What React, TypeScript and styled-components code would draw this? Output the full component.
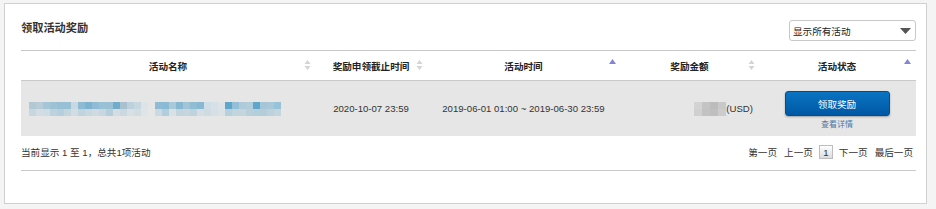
import { createGlobalStyle, styled } from "styled-components";

const GlobalStyle = createGlobalStyle`
  body {
    margin: 0;
    background: #f4f4f4;
    font-family: "Liberation Sans", Arial, "Noto Sans CJK SC", sans-serif;
    color: #333;
  }
`;

const COLUMNS = "294px 112px 193px 139px 156px";

const Page = styled.div`
  padding: 3px 0 0 4px;
`;

const Card = styled.div`
  width: 923px;
  height: 201px;
  box-sizing: border-box;
  border: 1px solid #d0d0d0;
  background: #fff;
  padding: 0 10px 0 16px;
`;

const TopBar = styled.div`
  display: flex;
  justify-content: space-between;
  align-items: flex-start;
  height: 46px;
`;

const Title = styled.h2`
  margin: 14px 0 0;
  font-size: 11.2px;
  line-height: 20px;
  font-weight: bold;
  color: #333;
`;

const Select = styled.div`
  margin-top: 16px;
  width: 127px;
  height: 21px;
  box-sizing: border-box;
  border: 1px solid #c8c8c8;
  border-radius: 3px;
  display: flex;
  align-items: center;
  justify-content: space-between;
  padding: 0 4px 0 3px;
  font-size: 9.6px;
  color: #222;
`;

const HeaderRow = styled.div`
  display: grid;
  grid-template-columns: ${COLUMNS};
  height: 31px;
  box-sizing: border-box;
  border-top: 1px solid #c8c8c8;
  border-bottom: 1px solid #cacaca;
`;

const HeaderCell = styled.div`
  position: relative;
  display: flex;
  align-items: center;
  justify-content: center;
  font-size: 9.6px;
  font-weight: bold;
  color: #222;
`;

const SortMark = styled.svg`
  position: absolute;
  right: 4px;
  top: 8px;
`;

const BodyRow = styled.div`
  display: grid;
  grid-template-columns: ${COLUMNS};
  height: 55px;
  background: #e6e6e6;
`;

const BodyCell = styled.div<{ $align: "left" | "center" | "right" }>`
  display: flex;
  align-items: center;
  justify-content: ${({ $align }) =>
    $align === "left" ? "flex-start" : $align === "right" ? "flex-end" : "center"};
  padding: ${({ $align }) =>
    $align === "left" ? "0 0 0 8px" : $align === "right" ? "0 6px 0 0" : "0"};
  font-size: 9.6px;
  color: #333;
  white-space: nowrap;
`;

const Mosaic = styled.div<{ $cols: number; $w: number }>`
  display: grid;
  grid-template-columns: repeat(${({ $cols }) => $cols}, ${({ $w }) => $w}px);
  grid-auto-rows: 7px;
`;

const Tile = styled.span<{ $c: string }>`
  background: ${({ $c }) => $c};
`;

const ActionCell = styled.div`
  display: flex;
  flex-direction: column;
  align-items: center;
  padding-top: 10px;
`;

const ClaimButton = styled.button`
  width: 105px;
  height: 25px;
  box-sizing: border-box;
  border: 1px solid #004e93;
  border-radius: 3px;
  background: linear-gradient(#0a74c2, #0058a4);
  box-shadow: 0 1px 2px rgba(0, 0, 0, 0.3);
  color: #fff;
  font-family: inherit;
  font-size: 9.6px;
  padding: 0;
`;

const DetailLink = styled.a`
  margin-top: 3px;
  font-size: 8px;
  line-height: 12px;
  color: #4a78a6;
  text-decoration: none;
`;

const Footer = styled.div`
  display: flex;
  justify-content: space-between;
  align-items: center;
  height: 35px;
  box-sizing: border-box;
  padding-bottom: 2px;
  border-bottom: 1px solid #cacaca;
  font-size: 9.6px;
  color: #333;
`;

const Pager = styled.div`
  display: flex;
  align-items: center;
  gap: 7px;
  padding-right: 3px;
`;

const PageBox = styled.span`
  width: 14px;
  height: 14px;
  box-sizing: border-box;
  margin: 0 -1px;
  border: 1px solid #bdbdbd;
  background: linear-gradient(#fff, #dcdcdc);
  display: flex;
  align-items: center;
  justify-content: center;
  font-size: 9.6px;
`;

const nameTop = [
  "#b3c8d5", "#b8ccd8", "#a5c6d8", "#9ec1d4", "#97c0d6", "#98c0d5", "#cad9e1", "#8dbbd3", "#7bb3d0",
  "#8fbcd4", "#98c1d6", "#99c0d5", "#70adcd", "#a9c0cf", "#bcd1dc", "#c7d8e0", "#dde4e8", "#e6e6e6",
  "#8fbcd4", "#8bbbd4", "#a9c8d8", "#87b7d1", "#a3c4d7", "#90bcd4", "#88b8d2", "#d0dfe7", "#d6e0e6",
  "#dde3e7", "#5ea6cc", "#94bfd6", "#afcbda", "#b1cddc", "#5ea6cc", "#a6c5d7", "#a9c7d8", "#97c2d8",
];

const nameBottom = [
  "#c8d6de", "#d3dde3", "#d0dce3", "#bcd2de", "#b7cfdc", "#c5d5de", "#d2dde3", "#c1d4de", "#c9d7df",
  "#d0dbe1", "#c7d6df", "#b6cedb", "#d4dde2", "#cbd8df", "#d8e0e5", "#d2dce2", "#dfe4e7", "#e4e6e7",
  "#ccd9e0", "#b2cedd", "#d9e1e5", "#c2d4de", "#c7d6de", "#bfd2dd", "#d5dee3", "#d0dbe1", "#d6dfe4",
  "#dae2e6", "#b8cfdc", "#c1d5df", "#c4d5de", "#b9d0dc", "#b5cedb", "#b3cddb", "#bcd1dc", "#c4d5de",
];

const amountTiles = [
  "#d3d3d3", "#c4c4c4", "#bcbcbc", "#c8c8c8",
  "#d0d0d0", "#c2c2c2", "#bfbfbf", "#cccccc",
];

type Sort = "both" | "asc";

const SortIcon = ({ dir }: { dir: Sort }) => (
  <SortMark width="7" height="12" viewBox="0 0 7 12">
    {dir === "asc" ? (
      <polygon points="3.5,0 7,5 0,5" fill="#8484d8" />
    ) : (
      <>
        <polygon points="3.5,1 6.5,5 0.5,5" fill="#d4d4d4" />
        <polygon points="0.5,7 6.5,7 3.5,11" fill="#d4d4d4" />
      </>
    )}
  </SortMark>
);

const columns: { label: string; sort: Sort }[] = [
  { label: "活动名称", sort: "both" },
  { label: "奖励申领截止时间", sort: "both" },
  { label: "活动时间", sort: "asc" },
  { label: "奖励金额", sort: "both" },
  { label: "活动状态", sort: "asc" },
];

export default function App() {
  return (
    <Page>
      <GlobalStyle />
      <Card>
        <TopBar>
          <Title>领取活动奖励</Title>
          <Select>
            <span>显示所有活动</span>
            <svg width="11" height="6" viewBox="0 0 11 6">
              <polygon points="0,0 11,0 5.5,6" fill="#555" />
            </svg>
          </Select>
        </TopBar>

        <HeaderRow>
          {columns.map((col) => (
            <HeaderCell key={col.label}>
              {col.label}
              <SortIcon dir={col.sort} />
            </HeaderCell>
          ))}
        </HeaderRow>

        <BodyRow>
          <BodyCell $align="left">
            <Mosaic $cols={36} $w={7}>
              {[...nameTop, ...nameBottom].map((c, i) => (
                <Tile key={i} $c={c} />
              ))}
            </Mosaic>
          </BodyCell>
          <BodyCell $align="center">2020-10-07 23:59</BodyCell>
          <BodyCell $align="center">2019-06-01 01:00 ~ 2019-06-30 23:59</BodyCell>
          <BodyCell $align="right">
            <Mosaic $cols={4} $w={8}>
              {amountTiles.map((c, i) => (
                <Tile key={i} $c={c} />
              ))}
            </Mosaic>
            (USD)
          </BodyCell>
          <ActionCell>
            <ClaimButton>领取奖励</ClaimButton>
            <DetailLink href="#">查看详情</DetailLink>
          </ActionCell>
        </BodyRow>

        <Footer>
          <span>当前显示 1 至 1，总共1项活动</span>
          <Pager>
            <span>第一页</span>
            <span>上一页</span>
            <PageBox>1</PageBox>
            <span>下一页</span>
            <span>最后一页</span>
          </Pager>
        </Footer>
      </Card>
    </Page>
  );
}
